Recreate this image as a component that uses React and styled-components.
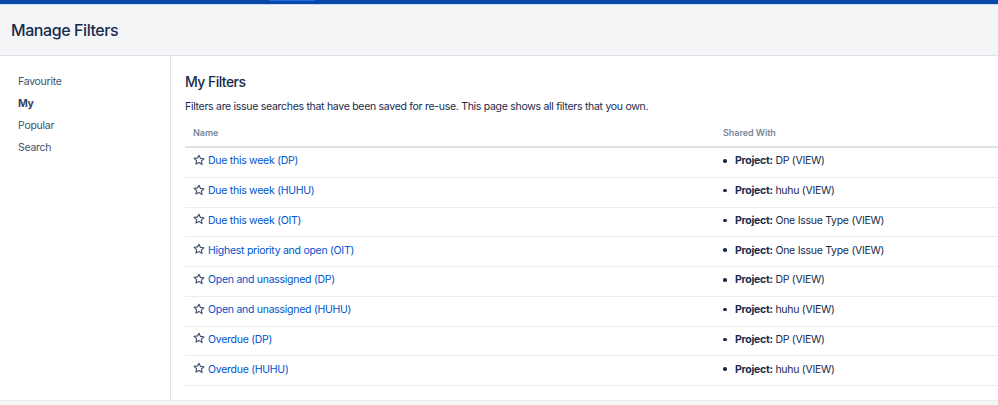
import React from 'react';
import styled, { createGlobalStyle } from 'styled-components';

const Global = createGlobalStyle`
  html, body { margin: 0; padding: 0; background: #fff; }
  body { font-family: Inter, "Noto Sans", "Liberation Sans", sans-serif; color: #172b4d; font-size: 10.5px; letter-spacing: -0.27px; overflow: hidden; }
`;
const Page = styled.div`
  width: 998px; height: 405px; display: flex; flex-direction: column; overflow: hidden;
`;
const TopBar = styled.div`
  height: 4px; flex: none; background: #0747a6; border-bottom: 1px solid #c9dafc;
  display: flex; align-items: flex-start; padding-left: 269px;
`;
const TopTab = styled.div`
  width: 46px; height: 1px; background: #1a6bf0;
`;
const Header = styled.header`
  height: 50px; flex: none; background: #f4f5f7; border-bottom: 1px solid #dfe1e6;
  display: flex; align-items: center; padding-left: 11px;
`;
const Title = styled.h1`
  margin: 0; font-size: 16px; font-weight: 500; letter-spacing: -0.42px; color: #172b4d;
`;
const Body = styled.div`
  flex: 1; display: flex; min-height: 0;
`;
const Side = styled.nav`
  width: 152px; flex: none; border-right: 1px solid #dfe1e6; padding: 15px 0 0 18px;
  display: flex; flex-direction: column;
`;
const SideItem = styled.a`
  height: 22px; line-height: 22px; color: ${p => p.$active ? '#344563' : '#42526e'}; font-weight: ${p => p.$active ? 700 : 400};
`;
const Main = styled.main`
  flex: 1; padding: 17px 0 0 14px; min-width: 0;
`;
const H2 = styled.h2`
  margin: 0; font-size: 14px; line-height: 18px; font-weight: 500; letter-spacing: -0.55px; color: #172b4d;
`;
const Intro = styled.p`
  margin: 9px 0 0; line-height: 14px; letter-spacing: -0.29px; color: #172b4d;
`;
const Table = styled.div`
  margin-top: 5px;
`;
const HeadRow = styled.div`
  display: grid; grid-template-columns: 530px 1fr; height: 27px; align-items: center;
  border-bottom: 2px solid #dfe1e6; padding-left: 8px;
  font-size: 9px; font-weight: 600; letter-spacing: -0.05px; color: #7a869a;
`;
const Row = styled.div`
  display: grid; grid-template-columns: 530px 1fr; height: 29.75px; box-sizing: border-box; align-items: center;
  border-bottom: 1px solid #ebecf0; padding: 0 0 3px 8px;
`;
const NameCell = styled.div`
  display: flex; align-items: center; gap: 3px;
`;
const Star = styled.svg`
  width: 12px; height: 12px; flex: none; margin-top: -2px;
`;
const Link = styled.a`
  color: #0052cc;
`;
const Shared = styled.ul`
  margin: 0; padding: 0; list-style: none;
`;
const Share = styled.li`
  display: flex; align-items: center; white-space: pre;
  &::before {
    content: ""; width: 3.5px; height: 3.5px; border-radius: 50%; background: #172b4d;
    margin: 0 8.5px 0 0; flex: none;
  }
`;
const Strong = styled.b`
  font-weight: 700;
`;
const Footer = styled.div`
  height: 4px; flex: none; background: #f4f5f7; border-top: 1px solid #ebecf0;
`;

const rows = [
  ['Due this week (DP)', 'DP'],
  ['Due this week (HUHU)', 'huhu'],
  ['Due this week (OIT)', 'One Issue Type'],
  ['Highest priority and open (OIT)', 'One Issue Type'],
  ['Open and unassigned (DP)', 'DP'],
  ['Open and unassigned (HUHU)', 'huhu'],
  ['Overdue (DP)', 'DP'],
  ['Overdue (HUHU)', 'huhu'],
];

export default function App() {
  return (
    <Page>
      <Global />
      <TopBar><TopTab /></TopBar>
      <Header><Title>Manage Filters</Title></Header>
      <Body>
        <Side>
          <SideItem>Favourite</SideItem>
          <SideItem $active>My</SideItem>
          <SideItem>Popular</SideItem>
          <SideItem>Search</SideItem>
        </Side>
        <Main>
          <H2>My Filters</H2>
          <Intro>Filters are issue searches that have been saved for re-use. This page shows all filters that you own.</Intro>
          <Table>
            <HeadRow><div>Name</div><div>Shared With</div></HeadRow>
            {rows.map(([n, s]) => (
              <Row key={n}>
                <NameCell>
                  <Star viewBox="0 0 24 24" fill="none" stroke="#42526e" strokeWidth="2.3" strokeLinejoin="round">
                    <path d="M12 2.5l2.95 6.3 6.85.85-5.05 4.7 1.35 6.8L12 16.8l-6.1 3.35 1.35-6.8-5.05-4.7 6.85-.85z" />
                  </Star>
                  <Link>{n}</Link>
                </NameCell>
                <Shared><Share><span><Strong>Project:</Strong> {s} (VIEW)</span></Share></Shared>
              </Row>
            ))}
          </Table>
        </Main>
      </Body>
      <Footer />
    </Page>
  );
}
